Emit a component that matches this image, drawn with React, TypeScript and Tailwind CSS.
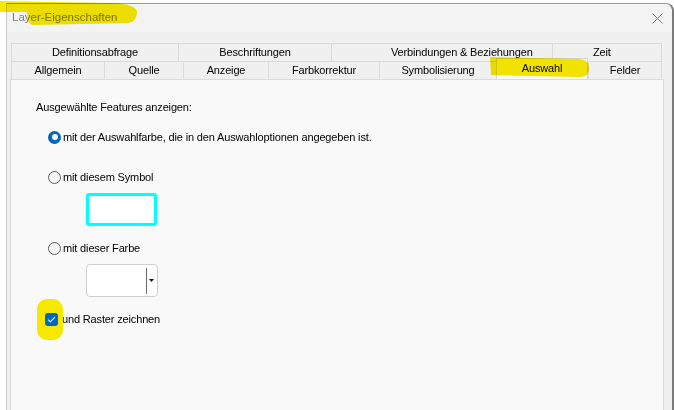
import React from "react";

type T = { label: string; w: number; selected?: boolean; pl?: number };

const row1: T[] = [
  { label: "Definitionsabfrage", w: 167 },
  { label: "Beschriftungen", w: 153 },
  { label: "Verbindungen & Beziehungen", w: 221, pl: 59 },
  { label: "Zeit", w: 110, pl: 40 },
];

const row2: T[] = [
  { label: "Allgemein", w: 93 },
  { label: "Quelle", w: 79 },
  { label: "Anzeige", w: 85 },
  { label: "Farbkorrektur", w: 111 },
  { label: "Symbolisierung", w: 117 },
  { label: "Auswahl", w: 92, selected: true },
  { label: "Felder", w: 74 },
];

function Radio({ checked }: { checked?: boolean }) {
  if (checked) {
    return (
      <span className="w-[13px] h-[13px] rounded-full bg-[#0067c0] flex items-center justify-center shrink-0">
        <span className="w-[6px] h-[6px] rounded-full bg-white" />
      </span>
    );
  }
  return <span className="w-[13px] h-[13px] rounded-full border border-[#5f5f5f] bg-[#f4f4f4] shrink-0" />;
}

function Tab({ label, w, selected, last, pl }: T & { last?: boolean }) {
  if (selected) {
    return (
      <div
        style={{ width: w }}
        className="relative z-10 -mt-[2px] h-[21px] bg-[#f9f9f9] border-t border-l border-r border-[#d6d6d6] flex items-center justify-center text-black pb-[1px]"
      >
        {label}
      </div>
    );
  }
  return (
    <div
      style={{ width: w, paddingLeft: pl }}
      className={
        "h-[18px] bg-[#f0f0f0] border-t border-l border-[#dadada] flex items-center text-black " +
        (pl ? "justify-start " : "justify-center ") +
        (last ? "border-r" : "")
      }
    >
      {label}
    </div>
  );
}

export default function App() {
  return (
    <div className="relative w-[674px] h-[410px] overflow-hidden bg-white pl-[6px] pt-[3px] font-['Liberation_Sans',Arial,sans-serif] text-[11px] tracking-[-0.15px] text-black">
      <div className="h-[420px] flex flex-col bg-[#f0f0f0] border-t border-l border-[#c9c9c9] border-t-[#9a9a9a] border-r-2 border-r-[#7a7a7a] rounded-tr-[8px]">
        {/* title bar */}
        <div className="h-[28px] shrink-0 bg-[#f3f3f3] rounded-tr-[8px] flex items-center justify-between pl-[5px] pr-[9px]">
          <span className="text-[11.5px] tracking-normal text-[#7f7f7f]">Layer-Eigenschaften</span>
          <svg width="11" height="11" viewBox="0 0 11 11" className="mt-[1px]">
            <path d="M0.5 0.5 L10.5 10.5 M10.5 0.5 L0.5 10.5" stroke="#7a7a7a" strokeWidth="1" />
          </svg>
        </div>
        {/* body */}
        <div className="flex-1 flex flex-col pl-[3px] pr-[8px] pt-[11px]">
          <div className="ml-[1px] flex flex-col">
            <div className="flex h-[18px]">
              {row1.map((t, i) => (
                <Tab key={t.label} {...t} last={i === row1.length - 1} />
              ))}
            </div>
            <div className="flex h-[18px] items-end">
              {row2.map((t, i) => (
                <Tab key={t.label} {...t} last={i === row2.length - 1} />
              ))}
            </div>
          </div>
          <div className="flex-1 bg-[#f9f9f9] border border-[#dadada] flex flex-col pt-[20px]">
            <div className="ml-[25px] leading-[14px]">Ausgewählte Features anzeigen:</div>
            <div className="ml-[37px] mt-[16px] h-[14px] flex items-center gap-[2px] leading-[14px]">
              <Radio checked />
              <span>mit der Auswahlfarbe, die in den Auswahloptionen angegeben ist.</span>
            </div>
            <div className="ml-[37px] mt-[26px] h-[14px] flex items-center gap-[2px] leading-[14px]">
              <Radio />
              <span>mit diesem Symbol</span>
            </div>
            <div className="ml-[75px] mt-[9px] w-[71px] h-[33px] rounded-[3px] border-[3px] border-[#00ffff] bg-white" />
            <div className="ml-[37px] mt-[15px] h-[14px] flex items-center gap-[2px] leading-[14px]">
              <Radio />
              <span>mit dieser Farbe</span>
            </div>
            <div className="ml-[75px] mt-[9px] w-[72px] h-[33px] rounded-[4px] border border-[#cfcfcf] bg-white flex items-center justify-end pr-[1px]">
              <div className="w-[1px] h-[26px] bg-[#6a6a6a]" />
              <div className="w-[9px] flex justify-center">
                <svg width="5" height="3" viewBox="0 0 5 3">
                  <path d="M0 0 L5 0 L2.5 3 Z" fill="#111" />
                </svg>
              </div>
            </div>
            <div className="ml-[34px] mt-[15px] h-[14px] flex items-center gap-[4px] leading-[14px]">
              <span className="relative w-[13px] h-[13px] shrink-0">
                <span className="absolute left-[-8px] top-[-14px] w-[26px] h-[41px] rounded-[10px] bg-[#f7e800]" />
                <span className="absolute inset-0 rounded-[3px] bg-[#0067c0] flex items-center justify-center">
                  <svg width="9" height="7" viewBox="0 0 9 7">
                    <path d="M1 3.6 L3.3 5.8 L8 1" stroke="#cfe3f7" strokeWidth="1.2" fill="none" />
                  </svg>
                </span>
              </span>
              <span>und Raster zeichnen</span>
            </div>
          </div>
        </div>
      </div>

      {/* highlighter annotations */}
      <svg
        width="674"
        height="410"
        viewBox="0 0 674 410"
        className="absolute left-0 top-0 z-20 pointer-events-none mix-blend-multiply"
      >
        <path
          d="M0,1 L112,3 Q136,4 137,12 Q137,22 128,23 L34,25 Q29,25 28,20 L27,12 L0,12 Z"
          fill="#f7e800"
        />
        <path d="M490,57 L580,59 Q589,60 589,68 Q589,77 580,77 L491,75 Z" fill="#f7e800" />
      </svg>
    </div>
  );
}
